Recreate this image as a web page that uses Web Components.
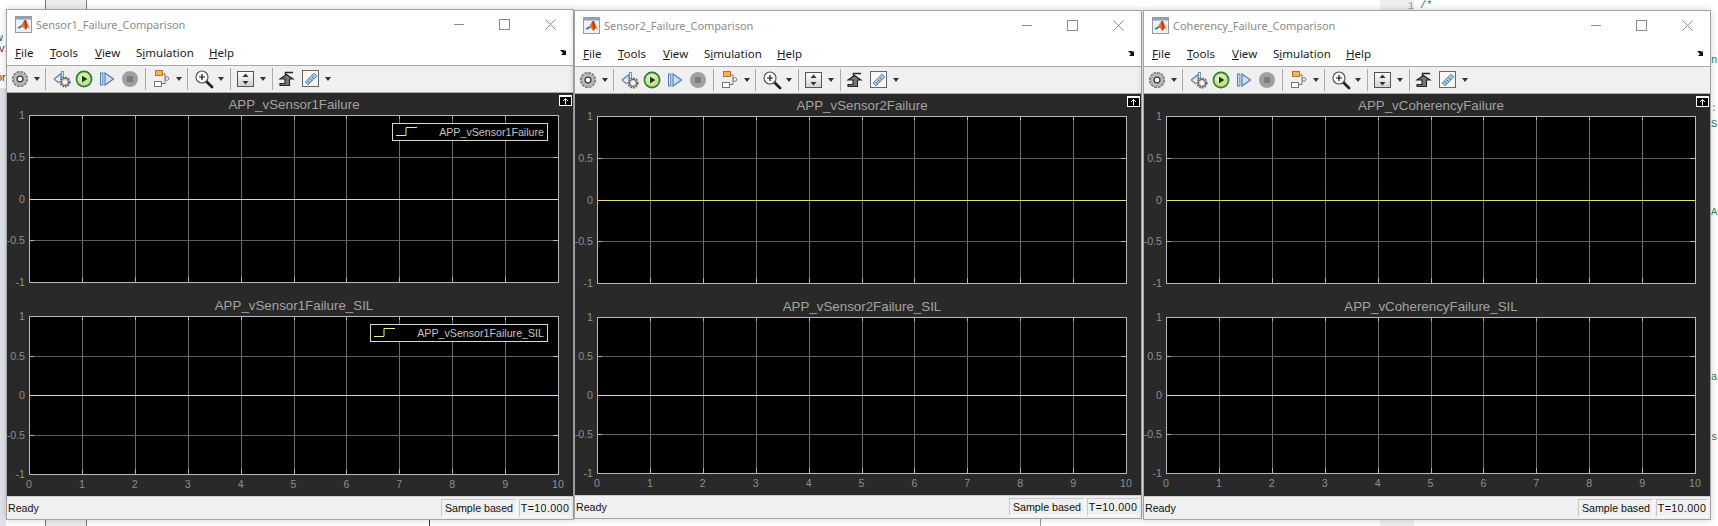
<!DOCTYPE html>
<html><head><meta charset="utf-8"><title>Scopes</title>
<style>
html,body{margin:0;padding:0;background:#fff;overflow:hidden}
body{width:1718px;height:526px;position:relative;font-family:"Liberation Sans",Arial,sans-serif}
</style></head><body>
<desk-backdrop></desk-backdrop>
<scope-window name="Sensor1_Failure_Comparison" s1="APP_vSensor1Failure" s2="APP_vSensor1Failure_SIL" legend style="left:6px;top:9px;height:511px" h1="168" gap="33" h2="159"></scope-window>
<scope-window name="Sensor2_Failure_Comparison" s1="APP_vSensor2Failure" s2="APP_vSensor2Failure_SIL" style="left:574px;top:10px;height:509px" h1="168" gap="33" h2="157"></scope-window>
<scope-window name="Coherency_Failure_Comparison" s1="APP_vCoherencyFailure" s2="APP_vCoherencyFailure_SIL" style="left:1143px;top:10px;height:510px" h1="168" gap="33" h2="157"></scope-window>
<script>
class DeskBackdrop extends HTMLElement{
  constructor(){super();this.attachShadow({mode:'open'}).innerHTML=`<style>
  :host{display:block;position:absolute;inset:0;overflow:hidden;background:#fff;font:10.5px "Liberation Mono",monospace;color:#333}
  .a{position:absolute}
  .cell{background:#ececec;border-left:1px solid #777;border-right:1px solid #777}
  .g{color:#2e7d4f}.o{color:#b8862b}
  .l{font:11px 'Liberation Sans';color:#444}
  </style>
  <div class="a" style="left:0;top:0;width:6px;height:526px;background:linear-gradient(#fff 0 88px,#dfe3ea 88px)"></div>
  <div class="a cell" style="left:45px;top:0;width:40px;height:9px"></div>
  <div class="a cell" style="left:45px;top:520px;width:40px;height:6px"></div>
  <div class="a" style="left:429px;top:519px;width:1px;height:7px;background:#333"></div>
  <div class="a" style="left:1040px;top:519px;width:1px;height:7px;background:#999"></div>
  <div class="a" style="left:1380px;top:0;width:34px;height:10px;background:#eee;color:#999;text-align:right">1</div>
  <div class="a g" style="left:1420px;top:-1px">/*</div>
  <div class="a" style="left:1380px;top:520px;width:34px;height:6px;background:#eee"></div>
  <div class="a l" style="left:-5px;top:31px">w</div>
  <div class="a l" style="left:-1px;top:42px">v1</div>
  <div class="a l" style="left:-4px;top:71px">or</div>
  <div class="a g" style="left:1711px;top:54px">n</div>
  <div class="a o" style="left:1711px;top:102px">:</div>
  <div class="a g" style="left:1711px;top:118px">S</div>
  <div class="a g" style="left:1711px;top:206px">A</div>
  <div class="a g" style="left:1711px;top:371px">a</div>
  <div class="a g" style="left:1711px;top:431px">s</div>`;}
}
customElements.define('desk-backdrop',DeskBackdrop);

const ICONS={
gear:`<svg width="20" height="20" viewBox="0 0 20 20"><circle cx="10" cy="10" r="7.300" fill="#cfcfcf" stroke="#7a7a7a" stroke-width="1.600" stroke-dasharray="3 .8"/><circle cx="10" cy="10" r="5.400" fill="#d8d8d8" stroke="#8a8a8a" stroke-width=".8"/><circle cx="10" cy="10" r="3" fill="#fff" stroke="#444" stroke-width="1.500"/></svg>`,
back:`<svg width="18" height="18" viewBox="0 0 18 18"><path d="M1 9 8 3.500V8M1 9l5 4" fill="#cfe0f2" stroke="#5c85b0" stroke-width="1.200"/><rect x="8.500" y="1.500" width="2" height="6" fill="#dce8f4" stroke="#5c85b0" stroke-width=".8"/><circle cx="12" cy="12" r="4.800" fill="none" stroke="#666" stroke-width="1.600" stroke-dasharray="1.800 1"/><circle cx="12" cy="12" r="3.600" fill="#ddd" stroke="#555"/><circle cx="12" cy="12" r="1.500" fill="#fff"/></svg>`,
play:`<svg width="18" height="18" viewBox="0 0 18 18"><defs><radialGradient id="pg" cx=".45" cy=".4" r=".65"><stop offset="0" stop-color="#f4fbd8"/><stop offset="1" stop-color="#a6d66a"/></radialGradient></defs><circle cx="9" cy="9" r="7.600" fill="url(#pg)" stroke="#2f7d2f" stroke-width="1.600"/><path d="M7 5.400 12.400 9 7 12.600z" fill="#1f3a1f"/></svg>`,
step:`<svg width="18" height="18" viewBox="0 0 18 18"><rect x="2.500" y="3" width="2.400" height="12" fill="#cfe0f2" stroke="#4f7fb5"/><path d="M7 3 15.500 9 7 15z" fill="#cfe0f2" stroke="#4f7fb5" stroke-width="1.200"/></svg>`,
stop:`<svg width="18" height="18" viewBox="0 0 18 18"><circle cx="9" cy="9" r="8" fill="#a0a0a0"/><rect x="6" y="6" width="6" height="6" fill="#7c7c7c"/></svg>`,
block:`<svg width="20" height="20" viewBox="0 0 20 20"><path d="M9 5h4v4.500h3.500M9.500 14.500H13v-5" fill="none" stroke="#777"/><rect x="3.500" y="1.500" width="7" height="5" fill="#f4b25c" stroke="#c8701a"/><rect x="2.500" y="12.500" width="7" height="5" fill="#fff" stroke="#777"/><circle cx="15" cy="9.500" r="1.800" fill="#fff" stroke="#777"/></svg>`,
zoom:`<svg width="20" height="20" viewBox="0 0 20 20"><path d="M12 12l6 6" stroke="#222" stroke-width="2.800" stroke-linecap="round"/><circle cx="8" cy="8" r="6" fill="#fff" stroke="#555" stroke-width="1.200"/><path d="M5 8h6M8 5v6" stroke="#111" stroke-width="1.200"/></svg>`,
auto:`<svg width="18" height="18" viewBox="0 0 18 18"><defs><linearGradient id="ag" x1="0" y1="0" x2="0" y2="1"><stop offset="0" stop-color="#fff"/><stop offset="1" stop-color="#cfcfcf"/></linearGradient></defs><rect x=".5" y="1.500" width="16" height="15" fill="url(#ag)" stroke="#555"/><path d="M8.500 3.500 11.500 7H5.500zM8.500 14.500 11.500 11H5.500z" fill="#333"/></svg>`,
sig:`<svg width="18" height="18" viewBox="0 0 18 18"><path d="M16 2.500H8.500V6" fill="none" stroke="#222" stroke-width="1.400"/><path d="M3 9 9.500 4.500 16 9H12.500V15.500H3V13.500H8V9z" fill="#777" stroke="#222" stroke-width="1.100"/></svg>`,
ruler:`<svg width="18" height="18" viewBox="0 0 18 18"><rect x=".5" y=".5" width="16" height="16" fill="#fafafa" stroke="#666"/><path d="M3 12 12 3l3 3-9 9z" fill="#9cc4e0" stroke="#5a7f9a" stroke-width=".8"/><path d="M6 11l1.500 1.500M8 9l1.500 1.500M10 7l1.500 1.500" stroke="#345" stroke-width=".7"/></svg>`
};
class ToolBar extends HTMLElement{
  constructor(){super();
    const it=[['gear',20,3],['d',7,4],['s',1,5],['back',18,7],['play',18,4],['step',18,5],['stop',18,5],['s',1,6],['block',20,6],['d',7,3.5],['s',1,5.5],['zoom',20,6],['d',7,3.5],['s',1,6],['auto',18,6.5],['d',7,4.5],['s',1,6],['sig',18,4.5],['ruler',18,7],['d',7,4.5]];
    const html=it.map(([k,w,m])=>k==='d'?`<i class="d" style="margin-left:${m}px"></i>`:k==='s'?`<i class="s" style="margin-left:${m}px"></i>`:`<span class="ic" style="width:${w}px;margin-left:${m}px">${ICONS[k]}</span>`).join('');
    this.attachShadow({mode:'open'}).innerHTML=`<style>
    :host{display:flex;align-items:center;height:26px;flex:none;background:#f0f0f0;border-bottom:1px solid #a8a8a8}
    .ic{display:flex;flex:none;justify-content:center}
    .d{flex:none;width:0;height:0;border:3.5px solid transparent;border-top:4px solid #333;border-bottom:0}
    .s{flex:none;width:1px;height:22px;background:#a9a9a9}
    </style>${html}`;}
}
customElements.define('tool-bar',ToolBar);

class ScopeAxes extends HTMLElement{
  constructor(){super();this.attachShadow({mode:'open'});}
  connectedCallback(){
    const H=+this.getAttribute('h'),W=529,S=52.9,xl=this.hasAttribute('xlabels'),leg=this.getAttribute('legend');
    let g='';
    for(let i=1;i<10;i++){const x=Math.round(S*i)+.5;g+=`<path d="M${x} 0V${H}" stroke="#6c6c6c"/><path d="M${x} 0v4M${x} ${H}v-5" stroke="#b0b0b0"/>`;}
    [.25,.75].forEach(f=>{const y=Math.round(H*f)+.5;g+=`<path d="M0 ${y}H${W}" stroke="#5e5e5e"/><path d="M0 ${y}h5M${W} ${y}h-5" stroke="#b0b0b0"/>`;});
    const mid=Math.round(H/2)+.5;
    let t='';
    ['1','0.5','0','-0.5','-1'].forEach((s,i)=>{const y=Math.round(H*i/4)+4;t+=`<text x="-4" y="${y}" text-anchor="end">${s}</text>`;});
    if(xl)for(let i=0;i<=10;i++)t+=`<text x="${S*i}" y="${H+14}" text-anchor="middle">${i}</text>`;
    this.shadowRoot.innerHTML=`<style>
    :host{display:block;position:relative;width:530px;height:${H+1}px;margin-left:22px}
    svg{display:block;overflow:visible}
    text{font:10.67px "Liberation Sans",Arial,sans-serif;fill:#8e8e8e}
    .leg{position:absolute;top:8px;right:11px;height:16px;display:flex;align-items:center;border:1px solid #d8d8d8;background:#000;color:#c4c4c4;font:10.67px "Liberation Sans",Arial,sans-serif;padding:0 3px;gap:22px;white-space:nowrap}
    .leg svg{flex:none}
    </style>
    <svg width="530" height="${H+1}" viewBox="0 0 530 ${H+1}"><rect width="530" height="${H+1}" fill="#000"/>${g}
    <path d="M0 ${mid}H${W}" stroke="#e2e272"/>
    <rect x=".5" y=".5" width="${W}" height="${H}" fill="none" stroke="#b8b8b8"/>${t}</svg>
    ${leg?`<div class="leg"><svg width="21" height="10" viewBox="0 0 21 10"><path d="M0 8.500H10V.500H21" fill="none" stroke="#f0f080"/></svg><span>${leg}</span></div>`:''}`;
  }
}
customElements.define('scope-axes',ScopeAxes);

class ScopeWindow extends HTMLElement{
  constructor(){super();this.attachShadow({mode:'open'});}
  connectedCallback(){
    const a=n=>this.getAttribute(n),l=this.hasAttribute('legend');
    const gap=+a('gap'),h1=+a('h1'),h2=+a('h2');
    this.shadowRoot.innerHTML=`<style>
    :host{display:flex;flex-direction:column;position:absolute;width:568px;box-sizing:border-box;border:1px solid #a3a3a3;background:#fff;box-shadow:0 0 7px rgba(0,0,0,.18)}
    .title{display:flex;align-items:center;height:28px;flex:none;padding-left:8px;color:#8b8b8b;font:11px "Noto Sans",sans-serif}
    .title .nm{margin-left:4px;flex:1}
    .wb{display:flex;align-items:center;justify-content:center;width:12px;height:12px;flex:none}
    .menu{display:flex;align-items:center;flex:none;position:relative;border-bottom:1px solid #a8a8a8;padding:2px 0 0 8px;box-sizing:content-box;height:25px;font:11.5px "Noto Sans",sans-serif;color:#1a1a1a}
    .menu span{flex:none}
    .menu u{text-underline-offset:1px}
    .grow{position:absolute;right:5px;top:12px}
    .plot{flex:1;min-height:0;position:relative;background:#292929;color:#a2a2a2}
    .tt{margin-left:22px;width:530px;text-align:center;font:13.33px "Liberation Sans",Arial,sans-serif;white-space:nowrap}
    .tt.t1{height:22px;line-height:24px}
    .tt.t2{height:${gap}px;line-height:${gap+13}px}
    .undock{position:absolute;right:1px;top:2px;width:13px;height:11px;box-sizing:border-box;border:1px solid #fff;background:#000}
    .undock svg{display:block}
    .status{display:flex;align-items:center;height:23px;flex:none;background:#f0f0f0;font:10.67px "Liberation Sans",Arial,sans-serif;color:#111;padding:0 2px 0 1px;gap:2px;border-top:1px solid #d0d0d0;box-sizing:border-box}
    .status .rd{flex:1}
    .status .bx{height:18px;line-height:17px;box-sizing:border-box;border:1px solid;border-color:#c9c9c9 #fff #fff #c9c9c9;text-align:center;white-space:nowrap;flex:none}
    </style>
    <div class="title">
      <svg width="17" height="17" viewBox="0 0 17 17" style="flex:none"><rect x=".5" y=".5" width="16" height="16" fill="#eef1f5" stroke="#9a9a9a"/><rect x="1" y="1" width="15" height="2.500" fill="#8aa4c4"/><path d="M2 12 6 9.500 9 4.500 11 4 15 13 12.500 11 10.500 14 7.500 10.500z" fill="#e5762a"/><path d="M2 12 6 9.500 7.500 10.500 5 12.500z" fill="#3a78ae"/><path d="M9 4.500 11 4 12.500 11 10.500 14z" fill="#c8391f"/></svg>
      <span class="nm">${a('name')}</span>
      <span class="wb" style="margin-right:33px"><svg width="10" height="10"><path d="M0 5.500H10" stroke="#8b8b8b"/></svg></span>
      <span class="wb" style="margin-right:34px"><svg width="11" height="11"><rect x=".5" y=".5" width="10" height="10" fill="none" stroke="#8b8b8b"/></svg></span>
      <span class="wb" style="margin-right:17px"><svg width="11" height="11"><path d="M.5 .5l10 10M10.500 .5l-10 10" stroke="#8b8b8b"/></svg></span>
    </div>
    <div class="menu"><span style="width:35px"><u>F</u>ile</span><span style="width:45px"><u>T</u>ools</span><span style="width:41px"><u>V</u>iew</span><span style="width:73px">S<u>i</u>mulation</span><span><u>H</u>elp</span>
      <svg class="grow" width="8" height="7" viewBox="0 0 8 7"><path d="M0 0h4l1 1 1-1v5H1l2-2z" fill="#111"/></svg></div>
    <tool-bar></tool-bar>
    <div class="plot">
      <div class="undock"><svg width="11" height="9" viewBox="0 0 11 9"><path d="M0 .5H11M5.500 2.500v6M3 5l2.500-2.500L8 5" fill="none" stroke="#fff"/></svg></div>
      <div class="tt t1">${a('s1')}</div>
      <scope-axes h="${h1-1}" ${l?`legend="${a('s1')}"`:''}></scope-axes>
      <div class="tt t2">${a('s2')}</div>
      <scope-axes h="${h2-1}" xlabels ${l?`legend="${a('s2')}"`:''}></scope-axes>
    </div>
    <div class="status"><span class="rd">Ready</span><span class="bx" style="width:76px">Sample based</span><span class="bx" style="width:52px;letter-spacing:.4px">T=10.000</span></div>`;
  }
}
customElements.define('scope-window',ScopeWindow);
</script>
</body></html>
